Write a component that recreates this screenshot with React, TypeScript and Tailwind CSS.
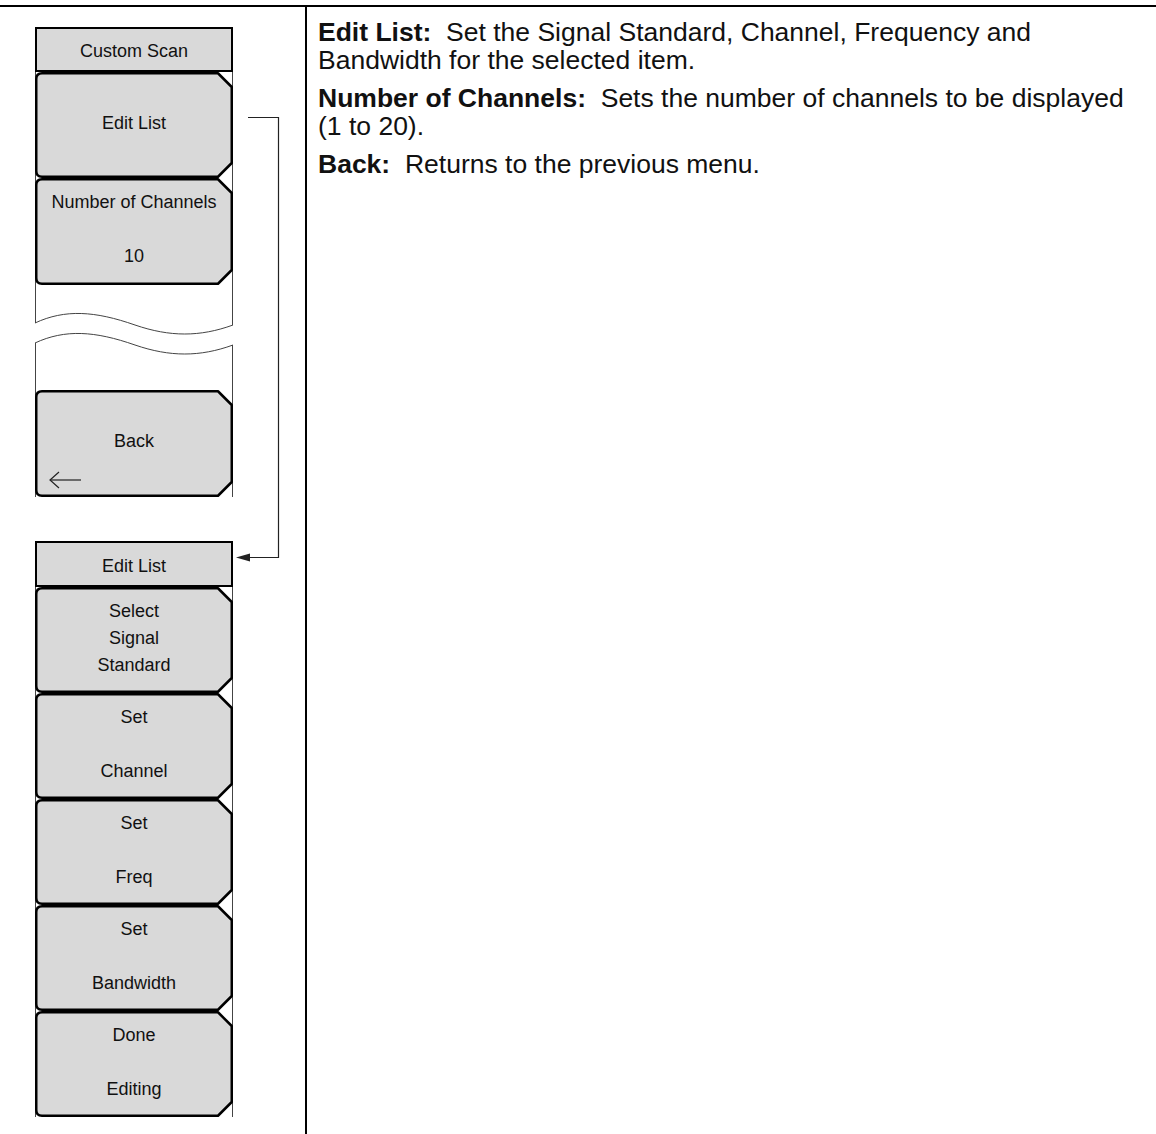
import React from "react";

const KEY_FILL = "#d9d9d9";

function Key({
  lines,
  h = 106,
  arrow = false,
}: {
  lines: string[];
  h?: number;
  arrow?: boolean;
}) {
  const p = `M7,1.25 H183 L196.75,15 V${h - 15} L183,${h - 1.25} H7 Q1.25,${h - 1.25} 1.25,${h - 7} V7 Q1.25,1.25 7,1.25 Z`;
  return (
    <div className="relative w-[198px]" style={{ height: h }}>
      <svg className="absolute inset-0" width={198} height={h} viewBox={`0 0 198 ${h}`}>
        <line x1={0.5} y1={0} x2={0.5} y2={h} stroke="#444" strokeWidth={1} />
        <line x1={197.5} y1={0} x2={197.5} y2={h} stroke="#444" strokeWidth={1} />
        <path d={p} fill={KEY_FILL} stroke="#000" strokeWidth={2.5} strokeLinejoin="round" />
        {arrow && (
          <g stroke="#222" strokeWidth={1.2} fill="none">
            <path d="M15,90 H46" />
            <path d="M24,82 L15,90 L24,98" />
          </g>
        )}
      </svg>
      <div className="relative flex flex-col items-center pt-[11px] text-[18px] leading-[27px] text-[#111]">
        {lines.map((l, i) => (
          <div key={i} className="h-[27px] whitespace-nowrap">
            {l === "" ? "\u00a0" : l}
          </div>
        ))}
      </div>
    </div>
  );
}

function Header({ label, h }: { label: string; h: number }) {
  return (
    <div
      className="flex w-[198px] items-center justify-center border-2 border-black bg-[#d9d9d9] pt-[4px] text-[18px] text-[#111]"
      style={{ height: h }}
    >
      {label}
    </div>
  );
}

function Break() {
  return (
    <div className="relative h-[105px] w-[198px]">
      <svg className="absolute inset-0" width={198} height={105} viewBox="0 0 198 105">
        <g stroke="#444" strokeWidth={1} fill="none">
          <path d="M0.5,0 V38" />
          <path d="M197.5,0 V40" />
          <path d="M0.5,58 V105" />
          <path d="M197.5,60 V105" />
          <path d="M0,38 C30,24 60,26 100,40 C135,52 165,52 198,40" />
          <path d="M0,58 C30,44 60,46 100,60 C135,72 165,72 198,60" />
        </g>
      </svg>
    </div>
  );
}

function Para({ children, className = "" }: { children: React.ReactNode; className?: string }) {
  return (
    <div className={`whitespace-nowrap text-[26.5px] leading-[28px] text-[#111] ${className}`}>
      {children}
    </div>
  );
}

export default function App() {
  return (
    <div className="relative h-[1134px] w-[1156px] overflow-hidden bg-white font-['Liberation_Sans',Arial,sans-serif] text-black">
      <div className="mt-[5px] h-[2px] w-full bg-black" />
      <div className="flex h-[1127px]">
        <div className="w-[305px] pl-[35px] pt-[20px]">
          <div className="flex w-[198px] flex-col">
            <Header label="Custom Scan" h={45} />
            <Key lines={["", "Edit List", ""]} h={106} />
            <Key lines={["Number of Channels", "", "10"]} h={107} />
            <Break />
            <Key lines={["", "Back", ""]} h={107} arrow />
            <div className="h-[44px]" />
            <Header label="Edit List" h={46} />
            <Key lines={["Select", "Signal", "Standard"]} />
            <Key lines={["Set", "", "Channel"]} />
            <Key lines={["Set", "", "Freq"]} />
            <Key lines={["Set", "", "Bandwidth"]} />
            <Key lines={["Done", "", "Editing"]} />
          </div>
        </div>
        <div className="w-[2px] bg-black" />
        <div className="flex-1 pl-[11px] pt-[11px]">
          <Para>
            <b>Edit List:</b>
            {"\u00a0 "}Set the Signal Standard, Channel, Frequency and
            <br />
            Bandwidth for the selected item.
          </Para>
          <Para className="mt-[10px]">
            <b>Number of Channels:</b>
            {"\u00a0 "}Sets the number of channels to be displayed
            <br />
            (1 to 20).
          </Para>
          <Para className="mt-[10px]">
            <b>Back:</b>
            {"\u00a0 "}Returns to the previous menu.
          </Para>
        </div>
      </div>
      <svg
        className="pointer-events-none absolute left-0 top-0"
        width={300}
        height={600}
        viewBox="0 0 300 600"
      >
        <path d="M248,117.5 H278.5 V557.5 H249" stroke="#222" strokeWidth={1.2} fill="none" />
        <polygon points="236,557.5 250,553.5 250,561.5" fill="#222" />
      </svg>
    </div>
  );
}
